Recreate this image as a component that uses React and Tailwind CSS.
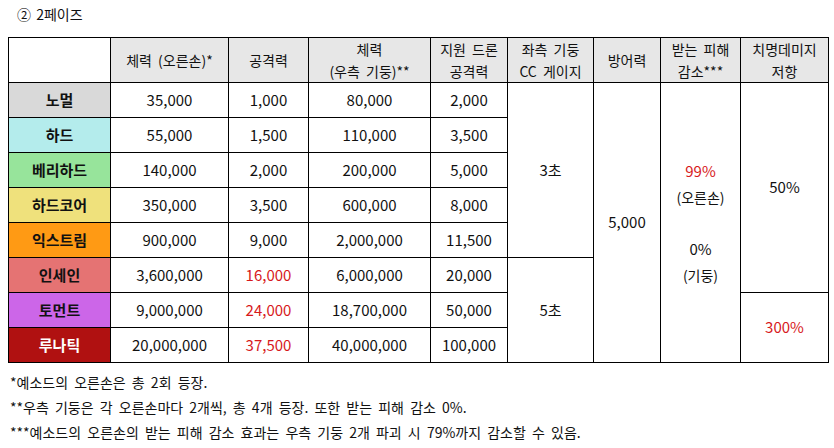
const rows = [
  { name: '노멀', bg: 'bg-[#d9d9d9]', hp: '35,000', atk: '1,000', pillar: '80,000', drone: '2,000' },
  { name: '하드', bg: 'bg-[#b4ecec]', hp: '55,000', atk: '1,500', pillar: '110,000', drone: '3,500' },
  { name: '베리하드', bg: 'bg-[#97e49b]', hp: '140,000', atk: '2,000', pillar: '200,000', drone: '5,000' },
  { name: '하드코어', bg: 'bg-[#efe17c]', hp: '350,000', atk: '3,500', pillar: '600,000', drone: '8,000' },
  { name: '익스트림', bg: 'bg-[#ff9a14]', hp: '900,000', atk: '9,000', pillar: '2,000,000', drone: '11,500' },
  { name: '인세인', bg: 'bg-[#e57373]', hp: '3,600,000', atk: '16,000', red: true, pillar: '6,000,000', drone: '20,000' },
  { name: '토먼트', bg: 'bg-[#cc66e8]', hp: '9,000,000', atk: '24,000', red: true, pillar: '18,700,000', drone: '50,000' },
  { name: '루나틱', bg: 'bg-[#b01111]', white: true, hp: '20,000,000', atk: '37,500', red: true, pillar: '40,000,000', drone: '100,000' },
];

const cell = 'border border-black text-center align-middle';
const head = 'border border-black text-center align-middle bg-[#e7e7e7] text-[14px] leading-[22px] font-normal [word-spacing:3px]';

export default function App() {
  return (
    <div className="w-[834px] h-[448px] bg-white text-[#111] font-['Noto_Sans_CJK_KR','Noto_Sans',sans-serif]">
      <div className="pt-[4px] pl-[17px] text-[14px] h-[37px] [word-spacing:2px]">② 2페이즈</div>
      <table className="ml-[8px] w-[820px] table-fixed border-collapse border-[1.5px] border-black">
        <colgroup>
          <col className="w-[102px]" />
          <col className="w-[118px]" />
          <col className="w-[80px]" />
          <col className="w-[122px]" />
          <col className="w-[77px]" />
          <col className="w-[86px]" />
          <col className="w-[67px]" />
          <col className="w-[80px]" />
          <col className="w-[88px]" />
        </colgroup>
        <thead>
          <tr className="h-[44px]">
            <th className="border border-black bg-white"></th>
            <th className={head}>체력 (오른손)*</th>
            <th className={head}>공격력</th>
            <th className={head}>체력<br />(우측 기둥)**</th>
            <th className={head}>지원 드론<br />공격력</th>
            <th className={head}>좌측 기둥<br />CC 게이지</th>
            <th className={head}>방어력</th>
            <th className={head}>받는 피해<br />감소***</th>
            <th className={head}>치명데미지<br />저항</th>
          </tr>
        </thead>
        <tbody className="text-[15px]">
          {rows.map((r, i) => (
            <tr key={r.name} className="h-[35px]">
              <td className={`${cell} ${r.bg} font-bold ${r.white ? 'text-white' : ''}`}>{r.name}</td>
              <td className={cell}>{r.hp}</td>
              <td className={`${cell} ${r.red ? 'text-[#d7191c]' : ''}`}>{r.atk}</td>
              <td className={cell}>{r.pillar}</td>
              <td className={cell}>{r.drone}</td>
              {i === 0 && <td rowSpan={5} className={cell}>3초</td>}
              {i === 5 && <td rowSpan={3} className={cell}>5초</td>}
              {i === 0 && <td rowSpan={8} className={cell}>5,000</td>}
              {i === 0 && (
                <td rowSpan={8} className={cell + ' text-[14px] leading-[26px]'}>
                  <div className="text-[#d7191c] text-[15px]">99%</div>
                  <div>(오른손)</div>
                  <div className="h-[26px]"></div>
                  <div className="text-[15px]">0%</div>
                  <div>(기둥)</div>
                </td>
              )}
              {i === 0 && <td rowSpan={6} className={cell}>50%</td>}
              {i === 6 && <td rowSpan={2} className={`${cell} text-[#d7191c]`}>300%</td>}
            </tr>
          ))}
        </tbody>
      </table>
      <div className="pl-[10px] pt-[7px] text-[14px] leading-[25px] [word-spacing:3px]">
        <div>*예소드의 오른손은 총 2회 등장.</div>
        <div>**우측 기둥은 각 오른손마다 2개씩, 총 4개 등장. 또한 받는 피해 감소 0%.</div>
        <div>***예소드의 오른손의 받는 피해 감소 효과는 우측 기둥 2개 파괴 시 79%까지 감소할 수 있음.</div>
      </div>
    </div>
  );
}
